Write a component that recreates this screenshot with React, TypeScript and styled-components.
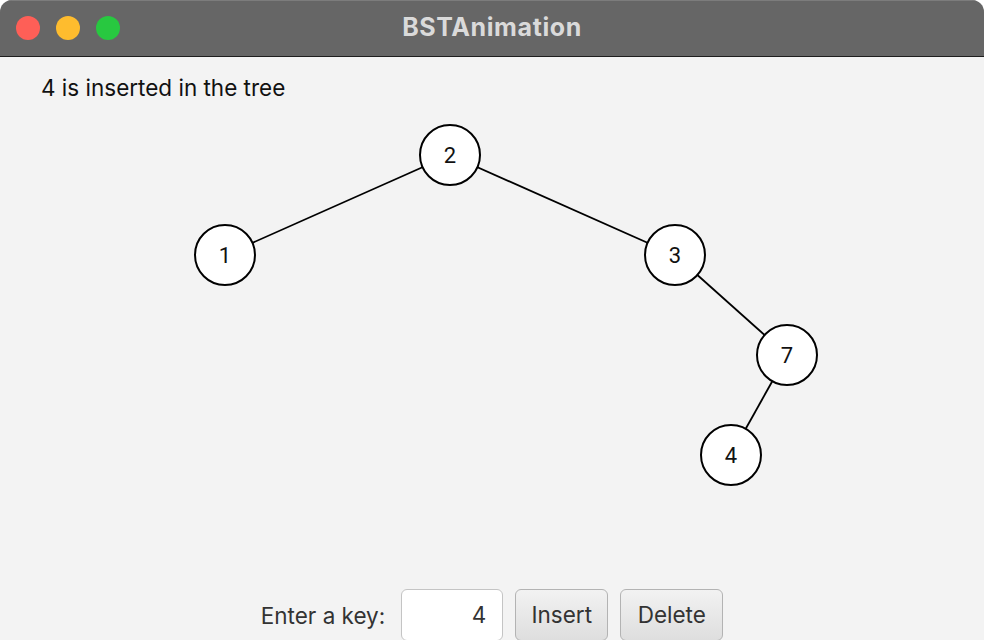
import React from 'react';
import styled, { createGlobalStyle } from 'styled-components';

// #region styled
const GlobalStyle = createGlobalStyle`
  html, body {
    margin: 0;
    padding: 0;
    background: #ffffff;
  }
  * {
    box-sizing: border-box;
  }
`;

const Window = styled.div`
  display: flex;
  flex-direction: column;
  width: 984px;
  height: 640px;
  overflow: hidden;
  border-radius: 12px 12px 0 0;
  background: #f3f3f3;
  font-family: Inter, 'Noto Sans', sans-serif;
`;

const TitleBar = styled.div`
  position: relative;
  display: flex;
  align-items: center;
  justify-content: center;
  height: 57px;
  flex-shrink: 0;
  background: #666666;
  border-top: 1px solid #7c7c7c;
  border-bottom: 1px solid #1e1e1e;
`;

const Lights = styled.div`
  position: absolute;
  left: 16px;
  top: 15px;
  display: flex;
  gap: 16px;
`;

const Light = styled.span<{ $color: string }>`
  display: block;
  width: 24px;
  height: 24px;
  border-radius: 50%;
  background: ${(p) => p.$color};
`;

const Title = styled.div`
  color: #dadada;
  font-size: 25px;
  font-weight: 700;
  letter-spacing: 0.6px;
  margin-top: -4px;
`;

const Content = styled.div`
  display: flex;
  flex-direction: column;
  flex: 1;
  min-height: 0;
`;

const Status = styled.div`
  height: 50px;
  padding: 17px 0 0 41px;
  font-size: 22.5px;
  line-height: 28px;
  color: #111111;
`;

const Canvas = styled.svg`
  display: block;
  flex: 1;
  width: 984px;
`;

const Controls = styled.div`
  display: flex;
  align-items: center;
  justify-content: center;
  height: 52px;
  flex-shrink: 0;
  gap: 12px;
  padding-top: 2px;
`;

const KeyLabel = styled.span`
  font-size: 22.5px;
  color: #333333;
  margin-right: 4px;
`;

const KeyField = styled.input`
  width: 102px;
  height: 52px;
  border: 1px solid #c4c4c4;
  border-radius: 6px;
  background: #ffffff;
  padding: 0 16px 2px 0;
  text-align: right;
  font-family: inherit;
  font-size: 22.5px;
  color: #333333;
  outline: none;
`;

const Button = styled.button<{ $width: number }>`
  width: ${(p) => p.$width}px;
  height: 52px;
  border: 1px solid #b3b3b3;
  border-radius: 6px;
  background: linear-gradient(#f2f2f2, #dedede);
  font-family: inherit;
  font-size: 22.5px;
  color: #333333;
  padding: 0 0 2px;
`;
// #endregion

type Node = { key: number; x: number; y: number; parent?: number };

// node centers in canvas coordinates (canvas starts at y=107)
const nodes: Node[] = [
  { key: 2, x: 450, y: 48 },
  { key: 1, x: 225, y: 148, parent: 2 },
  { key: 3, x: 675, y: 148, parent: 2 },
  { key: 7, x: 787, y: 248, parent: 3 },
  { key: 4, x: 731, y: 348, parent: 7 },
];

const R = 30;

const Tree: React.FC = () => {
  const byKey = (k: number) => nodes.find((n) => n.key === k)!;
  return (
    <Canvas viewBox="0 0 984 481" preserveAspectRatio="xMinYMin">
      {nodes
        .filter((n) => n.parent !== undefined)
        .map((n) => {
          const p = byKey(n.parent as number);
          return (
            <line
              key={`e${n.key}`}
              x1={p.x}
              y1={p.y}
              x2={n.x}
              y2={n.y}
              stroke="#000"
              strokeWidth={1.8}
            />
          );
        })}
      {nodes.map((n) => (
        <g key={n.key}>
          <circle cx={n.x} cy={n.y} r={R} fill="#fff" stroke="#000" strokeWidth={2} />
          <text
            x={n.x}
            y={n.y + 8}
            textAnchor="middle"
            fontFamily="Roboto, Inter, sans-serif"
            fontSize="22"
            fill="#111"
          >
            {n.key}
          </text>
        </g>
      ))}
    </Canvas>
  );
};

const App: React.FC = () => {
  return (
    <>
      <GlobalStyle />
      <Window>
        <TitleBar>
          <Lights>
            <Light $color="#fe5f57" />
            <Light $color="#febc2e" />
            <Light $color="#28c840" />
          </Lights>
          <Title>BSTAnimation</Title>
        </TitleBar>
        <Content>
          <Status>4 is inserted in the tree</Status>
          <Tree />
          <Controls>
            <KeyLabel>Enter a key:</KeyLabel>
            <KeyField type="text" defaultValue="4" />
            <Button $width={93}>Insert</Button>
            <Button $width={103}>Delete</Button>
          </Controls>
        </Content>
      </Window>
    </>
  );
};

export default App;
